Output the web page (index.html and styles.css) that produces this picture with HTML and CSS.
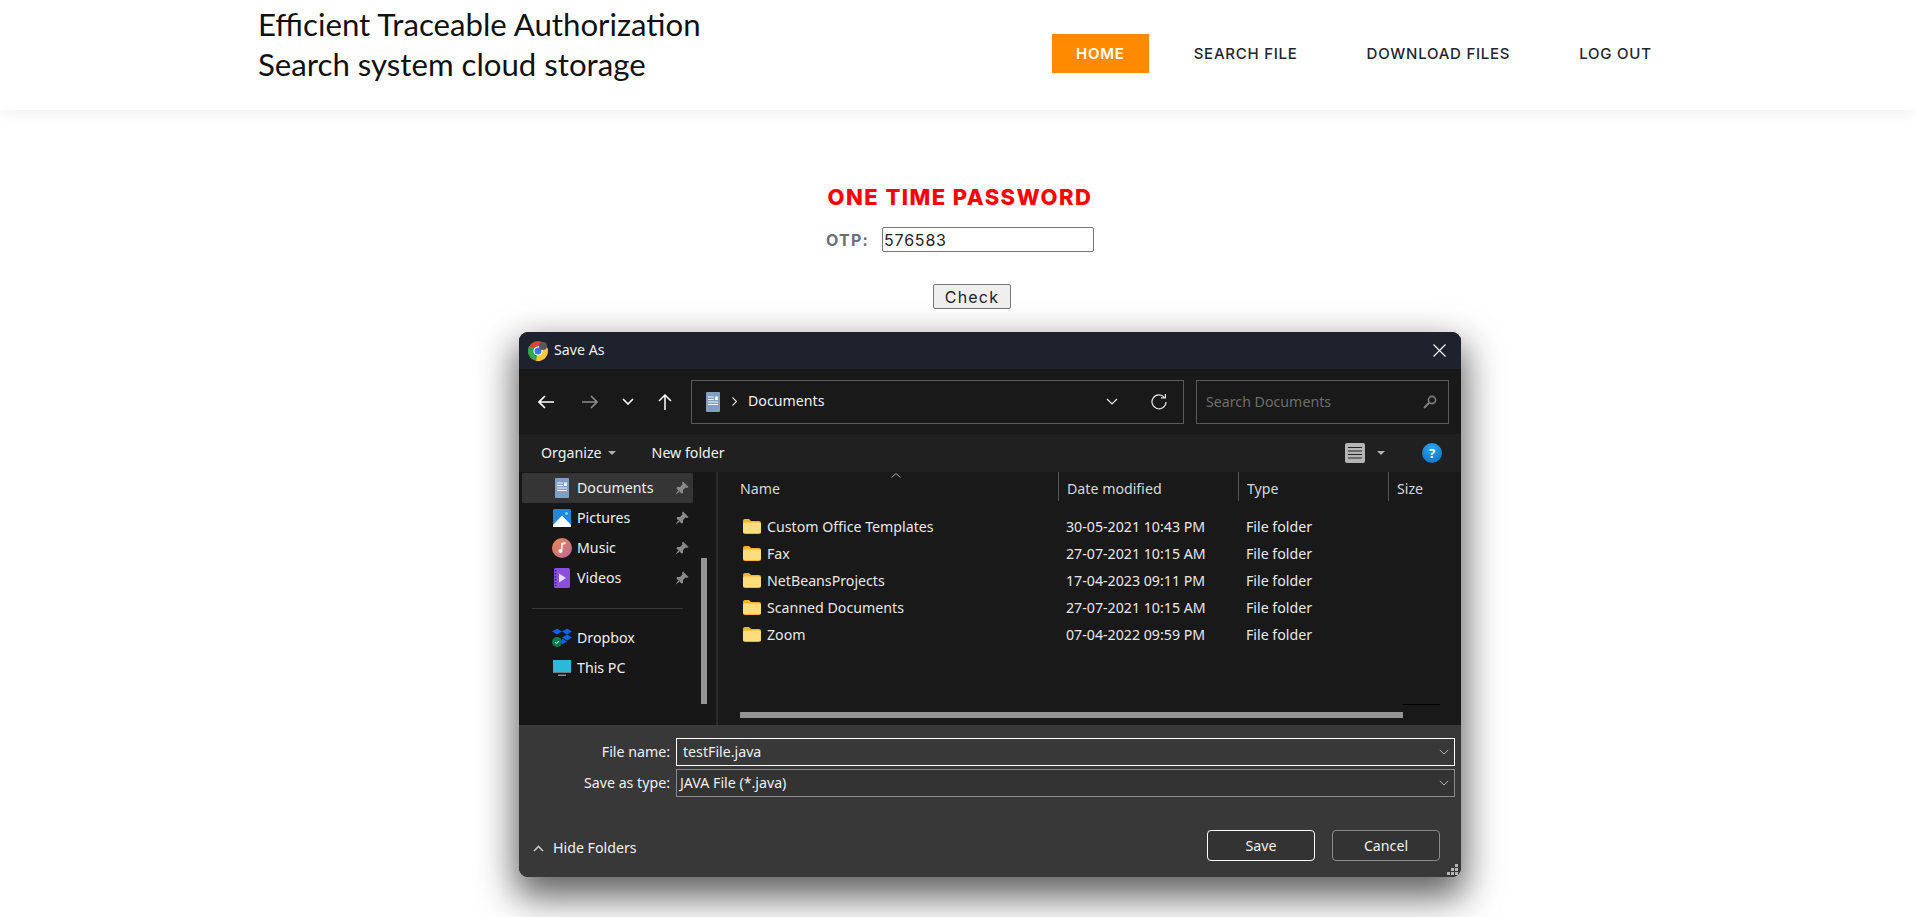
FILE: index.html
```html
<!DOCTYPE html>
<html lang="en">
<head>
    <meta charset="UTF-8">
    <title>Efficient Traceable Authorization Search system cloud storage</title>
    <link rel="stylesheet" href="styles.css">
</head>
<body>

    <svg class="defs" width="0" height="0">
        <symbol id="folder" viewBox="0 0 18 15">
            <path d="M0 2 Q0 0 2 0 H6 L8 2 H16 Q18 2 18 4 V13 Q18 15 16 15 H2 Q0 15 0 13Z" fill="#f4b425"/>
            <path d="M0 5 Q0 3.500 2 3.500 H16 Q18 3.500 18 5 V13 Q18 14 16 14 H2 Q0 14 0 13Z" fill="#ffdd7d"/>
        </symbol>
        <symbol id="pin" viewBox="0 0 14 14">
            <path d="M8 0.500 L13.500 6 L12 7 L10.500 6.500 L8 9 L8 12 L6.500 12.500 L1.500 7.500 L2 6 L5 6 L7.500 3.500 L7 2Z M3.500 9 L0.500 13.500 L5 10.500Z" fill="#8a8a8a"/>
        </symbol>
        <symbol id="docicon" viewBox="0 0 14 20">
            <path d="M1 0 H13 Q14 0 14 1 V19 Q14 20 13 20 H1 Q0 20 0 19 V1 Q0 0 1 0Z" fill="#7fa0c4"/>
            <path d="M2 5 H8 M2 7.500 H8 M2 10 H12 M2 12.500 H12" stroke="#f0f4f8" stroke-width="1.200"/>
            <rect x="9" y="4.500" width="3" height="3.500" fill="#f0f4f8"/>
        </symbol>
        <symbol id="chev" viewBox="0 0 12 7">
            <path d="M1 1 L6 6 L11 1" fill="none" stroke="currentColor" stroke-width="1.200"/>
        </symbol>
    </svg>

    <header class="site-header">
        <div class="brand">Efficient Traceable Authorization<br>Search system cloud storage</div>
        <nav class="nav">
            <a class="nav-item active">HOME</a>
            <a class="nav-item">SEARCH FILE</a>
            <a class="nav-item">DOWNLOAD FILES</a>
            <a class="nav-item">LOG OUT</a>
        </nav>
    </header>

    <main class="otp">
        <h2>ONE TIME PASSWORD</h2>
        <div class="otp-row">
            <label for="otp">OTP:</label>
            <input type="text" id="otp" value="576583">
        </div>
        <button class="check">Check</button>
    </main>

    <div class="dialog">
        <div class="titlebar">
            <svg class="chrome" width="20" height="20" viewBox="0 0 20 20">
                <circle cx="10" cy="10" r="10" fill="#db4437"/>
                <path d="M10 10 L1.300 5 A10 10 0 0 0 8 19.800Z" fill="#2da94f"/>
                <path d="M10 10 L8 19.800 A10 10 0 0 0 19.500 7 L10 5Z" fill="#fcc934"/>
                <circle cx="10" cy="10" r="4.600" fill="#fff"/>
                <circle cx="10" cy="10" r="3.500" fill="#3b78e7"/>
                <circle cx="15" cy="5" r="4" fill="#55585c"/>
            </svg>
            <span class="title-text">Save As</span>
            <svg class="close" width="13" height="13" viewBox="0 0 13 13">
                <path d="M0.500 0.500 L12.500 12.500 M12.500 0.500 L0.500 12.500" stroke="#fff" stroke-width="1.100"/>
            </svg>
        </div>

        <div class="toolbar">
            <svg class="tool back" width="16" height="14" viewBox="0 0 16 14">
                <path d="M16 7 H1 M7 1 L1 7 L7 13" fill="none" stroke="#fff" stroke-width="1.700"/>
            </svg>
            <svg class="tool forward" width="16" height="14" viewBox="0 0 16 14">
                <path d="M0 7 H15 M9 1 L15 7 L9 13" fill="none" stroke="#8a8a8a" stroke-width="1.700"/>
            </svg>
            <svg class="tool down" width="12" height="7" viewBox="0 0 12 7">
                <path d="M1 1 L6 6 L11 1" fill="none" stroke="#fff" stroke-width="1.600"/>
            </svg>
            <svg class="tool up" width="14" height="16" viewBox="0 0 14 16">
                <path d="M7 16 V1 M1 7 L7 1 L13 7" fill="none" stroke="#fff" stroke-width="1.500"/>
            </svg>
            <div class="address">
                <svg width="14" height="20"><use href="#docicon"/></svg>
                <svg class="crumb" width="5" height="9" viewBox="0 0 5 9">
                    <path d="M0.500 0.500 L4.500 4.500 L0.500 8.500" fill="none" stroke="#ddd" stroke-width="1.100"/>
                </svg>
                <span class="address-text">Documents</span>
                <svg class="addr-chev" width="12" height="7"><use href="#chev"/></svg>
                <svg class="refresh" width="16" height="16" viewBox="0 0 16 16">
                    <path d="M13.500 3.500 A7 7 0 1 0 15 8" fill="none" stroke="#e8e8e8" stroke-width="1.200"/>
                    <path d="M10 3.800 H14.400 V0" fill="none" stroke="#e8e8e8" stroke-width="1.200"/>
                </svg>
            </div>
            <div class="search">
                <span>Search Documents</span>
                <svg width="14" height="14" viewBox="0 0 14 14">
                    <circle cx="9" cy="5" r="3.600" fill="none" stroke="#808080" stroke-width="1.600"/>
                    <path d="M6.200 7.800 L1 13" stroke="#808080" stroke-width="2"/>
                </svg>
            </div>
        </div>

        <div class="commandbar">
            <span class="cmd">Organize</span>
            <i class="caret"></i>
            <span class="cmd new-folder">New folder</span>
            <svg class="view" width="20" height="20" viewBox="0 0 20 20">
                <rect width="20" height="20" rx="2" fill="#b4b4b4"/>
                <path d="M3 4.500 H17 M3 8 H17 M3 11.500 H17 M3 15 H17" stroke="#222" stroke-width="1.100"/>
            </svg>
            <i class="caret view-caret"></i>
            <span class="help">?</span>
        </div>

        <div class="browser">
            <aside class="sidebar">
                <div class="side-item selected">
                    <svg class="side-icon doc" width="14" height="20"><use href="#docicon"/></svg>
                    <span>Documents</span>
                    <svg class="pin" width="14" height="14"><use href="#pin"/></svg>
                </div>
                <div class="side-item">
                    <svg class="side-icon" width="18" height="18" viewBox="0 0 18 18">
                        <rect width="18" height="18" rx="1.500" fill="#1e88dc"/>
                        <path d="M0 16 L9 6.500 L18 16 V18 H0Z" fill="#fff"/>
                        <circle cx="13.500" cy="4.500" r="1.500" fill="#8fd0f8"/>
                    </svg>
                    <span>Pictures</span>
                    <svg class="pin" width="14" height="14"><use href="#pin"/></svg>
                </div>
                <div class="side-item">
                    <svg class="side-icon" width="20" height="20" viewBox="0 0 20 20">
                        <defs>
                            <linearGradient id="music" x1="0" y1="0" x2="1" y2="1">
                                <stop offset="0" stop-color="#ea8a4e"/>
                                <stop offset="1" stop-color="#c0659c"/>
                            </linearGradient>
                        </defs>
                        <circle cx="10" cy="10" r="10" fill="url(#music)"/>
                        <path d="M9 5 L13.500 4 V6 L10.500 6.800 V13 A2 2 0 1 1 9 11Z" fill="#fff"/>
                    </svg>
                    <span>Music</span>
                    <svg class="pin" width="14" height="14"><use href="#pin"/></svg>
                </div>
                <div class="side-item">
                    <svg class="side-icon" width="16" height="20" viewBox="0 0 16 20">
                        <rect width="16" height="20" rx="1.500" fill="#8a4fe0"/>
                        <path d="M5 5.500 L12 10 L5 14.500Z" fill="#e8dcfb"/>
                        <path d="M1.500 2 V18" stroke="#3c1d7a" stroke-width="1.500" stroke-dasharray="1.500 1.500"/>
                    </svg>
                    <span>Videos</span>
                    <svg class="pin" width="14" height="14"><use href="#pin"/></svg>
                </div>
                <div class="side-sep"></div>
                <div class="side-item">
                    <svg class="side-icon" width="20" height="19" viewBox="0 0 20 19">
                        <path d="M5 0 L10 3 L5 6 L0 3Z M15 0 L20 3 L15 6 L10 3Z M15 6 L20 9 L15 12 L10 9Z M10 10 L15 13 L10 16Z" fill="#0a62f0"/>
                        <circle cx="5" cy="13.500" r="5" fill="#0d7d4f"/>
                        <path d="M3 13.500 L4.500 15 L7 12.500" fill="none" stroke="#fff" stroke-width="1"/>
                    </svg>
                    <span>Dropbox</span>
                </div>
                <div class="side-item">
                    <svg class="side-icon" width="18" height="16" viewBox="0 0 18 16">
                        <rect width="18" height="12" fill="#2cb9d8"/>
                        <rect x="0" y="12" width="18" height="1" fill="#6a7a88"/>
                        <rect x="5" y="14.500" width="8" height="1.500" fill="#8a8a8a"/>
                    </svg>
                    <span>This PC</span>
                </div>
                <div class="side-scroll"></div>
            </aside>

            <section class="files">
                <svg class="sort" width="10" height="5" viewBox="0 0 10 5">
                    <path d="M0.500 4.500 L5 0.500 L9.500 4.500" fill="none" stroke="#aaa"/>
                </svg>
                <div class="file-head">
                    <div class="col col-name">Name</div>
                    <div class="col col-date">Date modified</div>
                    <div class="col col-type">Type</div>
                    <div class="col col-size">Size</div>
                </div>
                <div class="file-row">
                    <div class="col-name"><svg width="18" height="15"><use href="#folder"/></svg>Custom Office Templates</div>
                    <div class="col-date">30-05-2021 10:43 PM</div>
                    <div class="col-type">File folder</div>
                </div>
                <div class="file-row">
                    <div class="col-name"><svg width="18" height="15"><use href="#folder"/></svg>Fax</div>
                    <div class="col-date">27-07-2021 10:15 AM</div>
                    <div class="col-type">File folder</div>
                </div>
                <div class="file-row">
                    <div class="col-name"><svg width="18" height="15"><use href="#folder"/></svg>NetBeansProjects</div>
                    <div class="col-date">17-04-2023 09:11 PM</div>
                    <div class="col-type">File folder</div>
                </div>
                <div class="file-row">
                    <div class="col-name"><svg width="18" height="15"><use href="#folder"/></svg>Scanned Documents</div>
                    <div class="col-date">27-07-2021 10:15 AM</div>
                    <div class="col-type">File folder</div>
                </div>
                <div class="file-row">
                    <div class="col-name"><svg width="18" height="15"><use href="#folder"/></svg>Zoom</div>
                    <div class="col-date">07-04-2022 09:59 PM</div>
                    <div class="col-type">File folder</div>
                </div>
                <div class="hscroll"></div>
                <div class="hscroll-end"></div>
            </section>
        </div>

        <div class="savebar">
            <div class="field-grid">
                <label class="field-label">File name:</label>
                <div class="field focus">
                    <span>testFile.java</span>
                    <svg width="10" height="6"><use href="#chev"/></svg>
                </div>
                <label class="field-label">Save as type:</label>
                <div class="field type">
                    <span>JAVA File (*.java)</span>
                    <svg width="10" height="6"><use href="#chev"/></svg>
                </div>
            </div>
            <div class="actions">
                <div class="hide-folders">
                    <svg width="11" height="7" viewBox="0 0 11 7">
                        <path d="M1 6 L5.500 1.500 L10 6" fill="none" stroke="#c8c8c8" stroke-width="1.600"/>
                    </svg>
                    Hide Folders
                </div>
                <button class="dlg-btn default">Save</button>
                <button class="dlg-btn">Cancel</button>
            </div>
            <svg class="grip" width="11" height="11" viewBox="0 0 11 11">
                <path d="M8 0 H11 V3 H8Z M4 4 H7 V7 H4Z M8 4 H11 V7 H8Z M0 8 H3 V11 H0Z M4 8 H7 V11 H4Z M8 8 H11 V11 H8Z" fill="#b5b5b5"/>
            </svg>
        </div>
    </div>

</body>
</html>
```

FILE: styles.css
```css
html, body {
    margin: 0;
    height: 100%;
    overflow: hidden;
    background-color: #fff;
}
.defs {
    display: block;
    height: 0;
}
.site-header {
    display: flex;
    align-items: flex-start;
    height: 110px;
    padding-left: 258px;
    background-color: #fff;
    box-shadow: 0 2px 14px rgba(0, 0, 0, 0.07);
}
.brand {
    width: 794px;
    padding-top: 4px;
    font-family: "Lato", sans-serif;
    font-size: 31.2px;
    line-height: 40px;
    color: #111;
}
.nav {
    display: flex;
    align-items: center;
    margin-top: 34px;
    height: 39px;
    font-family: "Inter", sans-serif;
    font-size: 15px;
    font-weight: 500;
    letter-spacing: 0.75px;
    color: #22252e;
}
.nav-item {
    padding: 0 24px;
    margin-right: 21px;
    line-height: 37px;
}
.nav-item.active {
    background-color: #ff8a00;
    color: #fff;
    font-weight: 600;
    line-height: 39px;
}
.otp {
    padding-left: 4px;
    text-align: center;
    font-family: "Inter", sans-serif;
}
.otp h2 {
    margin: 0;
    padding-top: 74px;
    font-size: 22px;
    line-height: 26px;
    font-weight: 800;
    letter-spacing: 1.45px;
    color: #f00;
}
.otp-row {
    display: flex;
    justify-content: center;
    align-items: center;
    gap: 13px;
    margin-top: 17px;
}
.otp-row label {
    font-size: 16px;
    font-weight: 700;
    letter-spacing: 1.2px;
    color: #6c6e7a;
}
.otp-row input {
    box-sizing: border-box;
    width: 212px;
    height: 25px;
    padding: 0 1px;
    border: 1px solid #767676;
    border-radius: 2px;
    font-family: "Inter", sans-serif;
    font-size: 16px;
    letter-spacing: 0.8px;
    color: #222;
}
.check {
    display: block;
    box-sizing: border-box;
    width: 78px;
    height: 25px;
    margin: 32px 0 0 929px;
    padding: 0;
    background-color: #efefef;
    border: 1px solid #767676;
    border-radius: 2px;
    font-family: "Inter", sans-serif;
    font-size: 16px;
    letter-spacing: 1.2px;
    color: #222;
}

/* save as dialog, floats over the page */
.dialog {
    position: absolute;
    left: 519px;
    top: 332px;
    width: 942px;
    height: 545px;
    display: flex;
    flex-direction: column;
    border-radius: 9px;
    background-color: #191919;
    box-shadow: 0 16px 36px 4px rgba(0, 0, 0, 0.62);
    font-family: "Noto Sans", sans-serif;
    font-size: 14.2px;
    line-height: 20px;
    color: #f0f0f0;
}
.titlebar {
    display: flex;
    align-items: center;
    height: 37px;
    flex: none;
    padding: 0 15px 0 9px;
    background-color: #1e222d;
    border-radius: 9px 9px 0 0;
}
.chrome {
    margin-right: 6px;
}
.title-text {
    flex: 1;
    padding-bottom: 2px;
}
.toolbar {
    display: flex;
    align-items: center;
    flex: none;
    height: 65px;
    background-color: #191919;
    padding-left: 19px;
}
.tool {
    flex: none;
}
.forward {
    margin-left: 28px;
}
.down {
    margin-left: 24px;
}
.up {
    margin-left: 24px;
    margin-right: 19px;
}
.address {
    display: flex;
    align-items: center;
    box-sizing: border-box;
    width: 493px;
    height: 44px;
    padding-left: 14px;
    border: 1px solid #5a5a5a;
}
.crumb {
    margin-left: 12px;
}
.address-text {
    flex: 1;
    margin-left: 11px;
    padding-bottom: 2px;
}
.addr-chev {
    color: #eee;
    margin-right: 33px;
}
.refresh {
    margin-right: 16px;
}
.search {
    display: flex;
    align-items: center;
    justify-content: space-between;
    box-sizing: border-box;
    width: 253px;
    height: 44px;
    margin-left: 12px;
    padding: 0 11px 0 9px;
    border: 1px solid #5a5a5a;
    color: #6e6e6e;
}
.commandbar {
    display: flex;
    align-items: center;
    flex: none;
    height: 38px;
    padding-left: 22px;
    background-color: #202020;
}
.caret {
    width: 0;
    height: 0;
    margin-left: 6px;
    border-left: 4.5px solid transparent;
    border-right: 4.5px solid transparent;
    border-top: 4.5px solid #b0b0b0;
}
.new-folder {
    flex: 1;
    margin-left: 36px;
}
.view-caret {
    margin: 0 0 0 12px;
}
.help {
    width: 20px;
    height: 20px;
    margin: 0 19px 0 37px;
    border-radius: 50%;
    background: radial-gradient(circle at 50% 25%, #2aa5ee, #0a6fc4);
    text-align: center;
    line-height: 20px;
    font-weight: 700;
    font-size: 13px;
    color: #fff;
}
.browser {
    display: flex;
    flex: none;
    height: 253px;
    background-color: #191919;
}
.sidebar {
    position: relative;
    box-sizing: border-box;
    width: 199px;
    height: 253px;
    padding: 1px 0 0 3px;
    background-color: #171717;
    border-right: 2px solid #2b2b2b;
}
.side-item {
    position: relative;
    display: flex;
    align-items: center;
    width: 171px;
    height: 30px;
    border-radius: 2px;
}
.side-item.selected {
    background-color: #353535;
}
.side-icon {
    position: absolute;
    left: 40px;
    top: 50%;
    transform: translate(-50%, -50%);
}
.side-item span {
    flex: 1;
    padding-left: 55px;
}
.pin {
    margin-right: 4px;
}
.side-sep {
    width: 151px;
    height: 1px;
    margin: 15px 0 14px 10px;
    background-color: #383838;
}
.side-scroll {
    position: absolute;
    left: 182px;
    top: 86px;
    width: 6px;
    height: 146px;
    background-color: #949494;
}
.files {
    position: relative;
    flex: 1;
    background-color: #191919;
}
.sort {
    position: absolute;
    left: 173px;
    top: 1px;
}
.file-head {
    display: flex;
    height: 36px;
    color: #d8d8d8;
}
.col {
    box-sizing: border-box;
    line-height: 34px;
}
.file-head .col-date,
.file-head .col-type,
.file-head .col-size {
    border-left: 1px solid #555;
    height: 29px;
}
.col-name {
    width: 340px;
    padding-left: 22px;
    box-sizing: border-box;
}
.col-date {
    width: 180px;
    padding-left: 8px;
    box-sizing: border-box;
}
.col-type {
    width: 150px;
    padding-left: 8px;
    box-sizing: border-box;
}
.col-size {
    width: 60px;
    padding-left: 8px;
}
.file-row {
    display: flex;
    height: 27px;
    line-height: 27px;
    color: #e8e8e8;
}
.file-row:nth-child(3) {
    margin-top: 5px;
}
.file-row .col-name {
    display: flex;
    align-items: center;
    padding-left: 25px;
}
.file-row svg {
    margin-right: 6px;
}
.hscroll {
    position: absolute;
    left: 22px;
    top: 240px;
    width: 663px;
    height: 6px;
    background-color: #949494;
}
.hscroll-end {
    position: absolute;
    left: 685px;
    top: 232px;
    width: 37px;
    height: 1px;
    background-color: #000;
}
.savebar {
    position: relative;
    flex: 1;
    background-color: #383838;
    border-radius: 0 0 9px 9px;
}
.field-grid {
    display: grid;
    grid-template-columns: 151px 779px;
    grid-auto-rows: 28px;
    row-gap: 3px;
    column-gap: 6px;
    padding-top: 13px;
    align-items: center;
}
.field-label {
    text-align: right;
}
.field {
    display: flex;
    align-items: center;
    justify-content: space-between;
    box-sizing: border-box;
    height: 28px;
    padding: 0 5px 0 6px;
    border: 1px solid #fff;
    color: #f0f0f0;
}
.field svg {
    color: #b8b8b8;
}
.field.type {
    border-color: #8a8a8a;
    background-color: #333;
    padding-left: 3px;
}
.actions {
    display: flex;
    align-items: center;
    margin-top: 33px;
    padding-left: 14px;
}
.hide-folders {
    display: flex;
    align-items: center;
    gap: 9px;
    width: 674px;
    padding-top: 5px;
}
.dlg-btn {
    box-sizing: border-box;
    width: 108px;
    height: 31px;
    margin-right: 17px;
    padding: 0;
    background-color: #333;
    border: 1px solid #8a8a8a;
    border-radius: 4px;
    font-family: "Noto Sans", sans-serif;
    font-size: 14.2px;
    color: #f0f0f0;
}
.dlg-btn.default {
    border-color: #fff;
}
.grip {
    position: absolute;
    right: 3px;
    bottom: 2px;
}
```
